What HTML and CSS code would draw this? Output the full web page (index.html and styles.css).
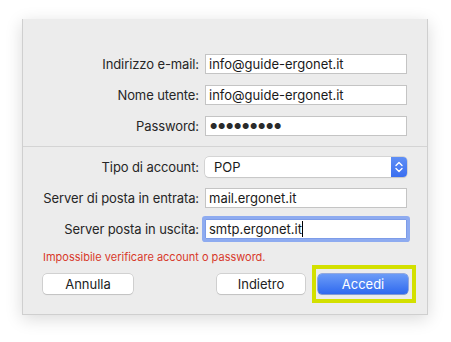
FILE: index.html
```html
<!DOCTYPE html>
<html>
<head>
<meta charset="utf-8">
<link rel="stylesheet" href="styles.css">
</head>
<body>
<div class="panel">
  <div class="form">
    <label class="lbl">Indirizzo e-mail:</label>
    <div class="field">info@guide-ergonet.it</div>
    <label class="lbl">Nome utente:</label>
    <div class="field">info@guide-ergonet.it</div>
    <label class="lbl">Password:</label>
    <div class="field dots">●●●●●●●●●</div>
  </div>
  <div class="sep"></div>
  <div class="form form2">
    <label class="lbl">Tipo di account:</label>
    <div class="select"><span class="sel-text">POP</span><span class="stepper"><svg width="16" height="20" viewBox="0 0 16 20"><path d="M5 8.5 L8 5.5 L11 8.5 M5 11.5 L8 14.5 L11 11.5" fill="none" stroke="#fff" stroke-width="1.4" stroke-linecap="round" stroke-linejoin="round"/></svg></span></div>
    <label class="lbl">Server di posta in entrata:</label>
    <div class="field">mail.ergonet.it</div>
    <label class="lbl">Server posta in uscita:</label>
    <div class="field focus">smtp.ergonet.it<span class="caret"></span></div>
  </div>
  <div class="error">Impossibile verificare account o password.</div>
  <div class="buttons">
    <button class="btn">Annulla</button>
    <div class="spacer"></div>
    <button class="btn back">Indietro</button>
    <div class="hl"><button class="btn primary">Accedi</button></div>
  </div>
</div>
</body>
</html>
```

FILE: styles.css
```css
html, body {
  margin: 0;
  padding: 0;
  background: #ffffff;
}
body {
  font-family: "Inter", "Liberation Sans", sans-serif;
  font-size: 13px;
  color: #262626;
  width: 451px;
  height: 342px;
  overflow: hidden;
}
.panel {
  margin: 19px 0 0 22px;
  width: 406px;
  height: 296px;
  box-sizing: border-box;
  background: #ececec;
  border-left: 1px solid #cfcfcf;
  border-right: 1px solid #cfcfcf;
  border-bottom: 1px solid #cfcfcf;
  box-shadow: 0 4px 16px rgba(0,0,0,0.15);
  display: flex;
  flex-direction: column;
}
.form {
  display: grid;
  grid-template-columns: 176px 202px;
  column-gap: 6px;
  row-gap: 11px;
  margin-top: 35px;
  align-items: center;
}
.form2 {
  margin-top: 10px;
}
.lbl {
  text-align: right;
  white-space: nowrap;
  line-height: 20px;
  letter-spacing: -0.1px;
}
.field {
  height: 20px;
  box-sizing: border-box;
  background: #fff;
  border: 1px solid #c4c4c4;
  padding: 0 0 0 3px;
  line-height: 18px;
  color: #1a1a1a;
  white-space: nowrap;
}
.dots {
  font-size: 8px;
  letter-spacing: 0.7px;
  color: #2a2a2a;
  padding-left: 4px;
}
.focus {
  box-shadow: 0 0 0 3px #8eabf0;
  border-color: #7d9ce8;
  border-radius: 1px;
}
.caret {
  display: inline-block;
  width: 1px;
  height: 16px;
  background: #000;
  vertical-align: -3px;
}
.sep {
  height: 1px;
  background: #d4d4d4;
  margin-top: 10px;
}
.select {
  height: 20px;
  box-sizing: border-box;
  display: flex;
  background: #fff;
  border-radius: 4px;
  box-shadow: 0 0 0 0.5px #bdbdbd, 0 1px 1px rgba(0,0,0,0.12);
  overflow: hidden;
}
.sel-text {
  flex: 1;
  padding-left: 9px;
  line-height: 20px;
  color: #1a1a1a;
}
.stepper {
  width: 16px;
  background: linear-gradient(#5f8ff5, #3a6ef0);
  display: flex;
}
.error {
  color: #d8392b;
  font-size: 11px;
  margin: 11px 0 0 20px;
  line-height: 14px;
}
.buttons {
  display: flex;
  align-items: center;
  margin: 1px 0 0 20px;
  width: 373px;
}
.spacer { flex: 1; }
.btn {
  font-family: inherit;
  font-size: 13px;
  width: 90px;
  height: 20px;
  padding: 0;
  background: #fff;
  color: #222;
  border: none;
  border-radius: 4px;
  box-shadow: 0 0 0 0.5px #b5b5b5, 0 1px 1px rgba(0,0,0,0.12);
  line-height: 20px;
}
.back {
  width: 88px;
}
.hl {
  margin-left: 7px;
  padding: 5px 4px 5px 2px;
  border: 4px solid #d3e000;
  display: flex;
}
.primary {
  color: #fff;
  background: linear-gradient(#6c9cf7, #2f69ef);
  box-shadow: 0 0 0 0.5px #3a66d0, 0 1px 1px rgba(0,0,0,0.15);
}
```
